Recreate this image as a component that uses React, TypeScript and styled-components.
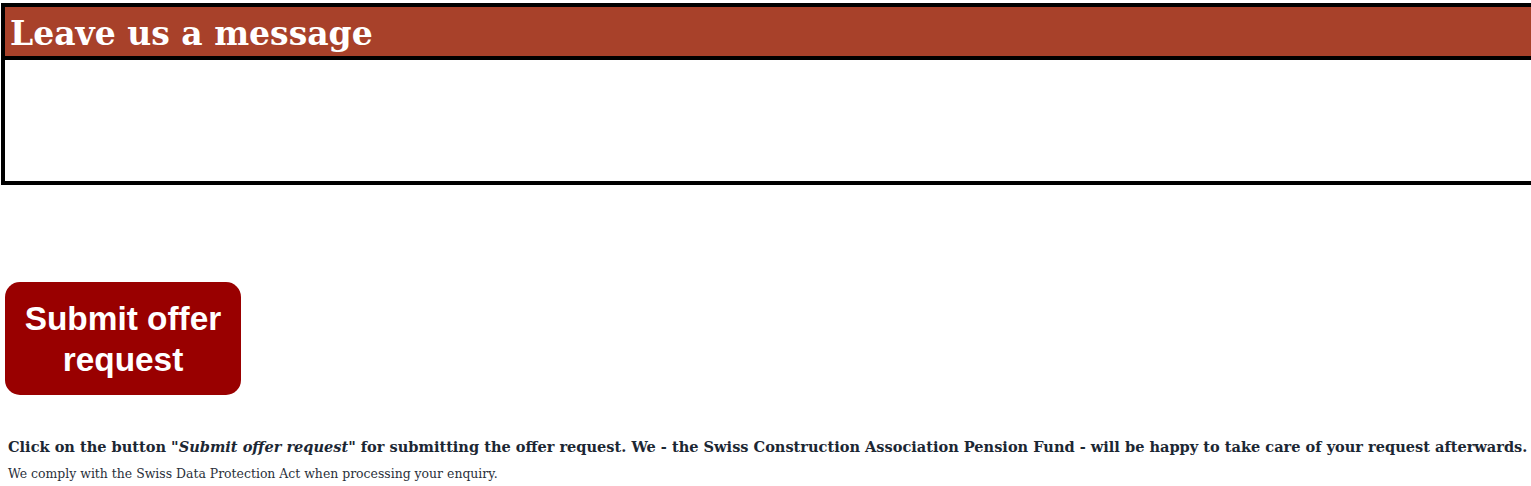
import styled, { createGlobalStyle } from 'styled-components'

const GlobalStyle = createGlobalStyle`
  html, body {
    margin: 0;
    padding: 0;
    background: #ffffff;
  }
  body {
    font-family: "DejaVu Serif", Georgia, serif;
    color: #1c2733;
  }
`

const Page = styled.div`
  width: 1531px;
  overflow: hidden;
  padding-top: 3px;
`

const MessageBox = styled.section`
  margin-left: 1px;
  width: 1540px;
  border: 4px solid #000;
  border-right: none;
`

const BoxHeader = styled.h2`
  margin: 0;
  height: 49px;
  background: #a8412a;
  border-bottom: 4px solid #000;
  color: #ffffff;
  font-family: "DejaVu Serif", Georgia, serif;
  font-weight: bold;
  font-size: 33px;
  line-height: 53px;
  padding-left: 5px;
  white-space: nowrap;
`

const MessageArea = styled.textarea`
  display: block;
  box-sizing: border-box;
  width: 100%;
  height: 121px;
  border: none;
  outline: none;
  resize: none;
  padding: 4px;
  font-family: "DejaVu Serif", Georgia, serif;
  font-size: 14px;
`

const ButtonRow = styled.div`
  padding: 97px 0 0 5px;
`

const SubmitButton = styled.button`
  width: 236px;
  height: 113px;
  border: none;
  border-radius: 15px;
  background: #990000;
  color: #ffffff;
  font-family: "Liberation Sans", Arial, sans-serif;
  font-weight: bold;
  font-size: 33.4px;
  line-height: 41px;
  padding: 0 4px;
  cursor: pointer;
`

const Notes = styled.div`
  padding: 41px 0 0 8px;
`

const Lead = styled.p`
  margin: 0;
  font-weight: bold;
  font-size: 14.55px;
  line-height: 22px;
  white-space: nowrap;
  color: #1c2733;
`

const Small = styled.p`
  margin: 7px 0 0;
  font-size: 12.45px;
  line-height: 18px;
  color: #2a2f3a;
  white-space: nowrap;
`

export default function App() {
  return (
    <>
      <GlobalStyle />
      <Page>
        <MessageBox>
          <BoxHeader>Leave us a message</BoxHeader>
          <MessageArea aria-label="Message" />
        </MessageBox>
        <ButtonRow>
          <SubmitButton type="submit">
            Submit offer
            <br />
            request
          </SubmitButton>
        </ButtonRow>
        <Notes>
          <Lead>
            Click on the button "<em>Submit offer request</em>" for submitting the offer
            request. We - the Swiss Construction Association Pension Fund - will be happy
            to take care of your request afterwards.
          </Lead>
          <Small>We comply with the Swiss Data Protection Act when processing your enquiry.</Small>
        </Notes>
      </Page>
    </>
  )
}
